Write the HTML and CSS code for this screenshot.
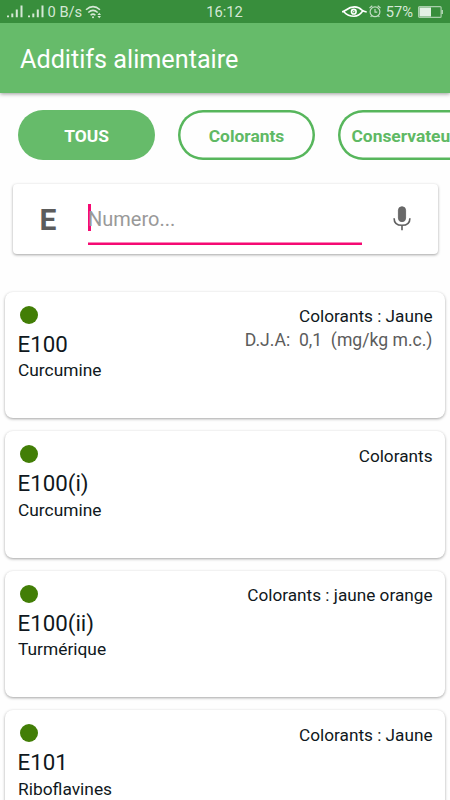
FILE: index.html
```html
<!DOCTYPE html>
<html lang="fr">
<head>
<meta charset="utf-8">
<meta name="viewport" content="width=device-width">
<title>Additifs alimentaire</title>
<link rel="stylesheet" href="styles.css">
</head>
<body>
<header>
  <div class="status">
    <div class="status-side">
      <svg class="signal" width="17" height="13" viewBox="0 0 17 13"><path d="M2 10.500v1.700M6.300 8.500v3.700M10.800 4.500v7.700M15.500 .5v11.700"/></svg>
      <svg class="signal second" width="17" height="13" viewBox="0 0 17 13"><path d="M2 10.500v1.700M6.300 8.500v3.700M10.800 4.500v7.700M15.500 .5v11.700"/></svg>
      <span class="rate">0 B/s</span>
      <svg class="wifi" width="17" height="14" viewBox="0 0 17 14"><path d="M1 4.800Q8 -1.500 15 4.800M3.300 7.500Q8 3.300 12.700 7.500M5.600 10.200Q8 8 10.400 10.200"/><circle cx="8" cy="12.300" r="1"/><path class="arrows" d="M14.200 7.800l1.800 2.300h-3.600zM14.200 13.200l1.800-2.300h-3.600z"/></svg>
    </div>
    <span class="clock">16:12</span>
    <div class="status-side right">
      <svg class="eye" width="25" height="12" viewBox="0 0 25 12"><path d="M0 5.700Q2 5.500 4 4Q8 .9 12.500 .9Q17 .9 20 4.200Q21.500 5.500 24.700 6M2 6Q6 10.300 12 10.300Q17 10.300 20.500 5.300"/><circle cx="11.800" cy="5.700" r="2.300"/><circle class="pupil" cx="11.800" cy="5.700" r=".8"/></svg>
      <svg class="alarm" width="12" height="13" viewBox="0 0 12 13"><circle cx="6" cy="6.800" r="4.900"/><path d="M.5 3L3.300 .8M8.700 .8L11.500 3M6 4v3.200h2.300M2.700 10.500l-1 1.500M9.300 10.500l1 1.500"/></svg>
      <span class="percent">57%</span>
      <svg class="battery" width="25" height="12" viewBox="0 0 25 12"><rect class="shell" x=".6" y=".6" width="22.500" height="10.800" rx="1"/><rect class="charge" x="1.500" y="1.500" width="11.500" height="9"/><path class="charge" d="M23.700 4h1v4h-1z"/></svg>
    </div>
  </div>
  <div class="appbar"><h1>Additifs alimentaire</h1></div>
</header>
<nav class="chips">
  <button class="chip active">TOUS</button>
  <button class="chip">Colorants</button>
  <button class="chip long">Conservateurs</button>
</nav>
<section class="search">
  <span class="prefix">E</span>
  <div class="field"><span class="caret"></span><span class="hint">Numero...</span></div>
  <svg class="mic" width="18" height="25" viewBox="0 0 18 25"><rect x="5.400" y=".7" width="7.200" height="15" rx="3.600"/><path d="M1.100 12.200C1.100 17 4.500 19.300 9 19.300S16.900 17 16.900 12.200M9 19.300v5"/></svg>
</section>
<main>
  <article class="card">
    <div class="item"><i class="dot"></i><h2>E100</h2><p>Curcumine</p></div>
    <div class="info"><p>Colorants : Jaune</p><p class="dose">D.J.A:&nbsp; 0,1&nbsp; (mg/kg m.c.)</p></div>
  </article>
  <article class="card">
    <div class="item"><i class="dot"></i><h2>E100(i)</h2><p>Curcumine</p></div>
    <div class="info"><p>Colorants</p></div>
  </article>
  <article class="card">
    <div class="item"><i class="dot"></i><h2>E100(ii)</h2><p>Turmérique</p></div>
    <div class="info"><p>Colorants : jaune orange</p></div>
  </article>
  <article class="card">
    <div class="item"><i class="dot"></i><h2>E101</h2><p>Riboflavines</p></div>
    <div class="info"><p>Colorants : Jaune</p></div>
  </article>
</main>
</body>
</html>
```
FILE: styles.css
```css
* { box-sizing: border-box; }
body {
  margin: 0;
  height: 800px;
  overflow: hidden;
  background: #fefefe;
  color: #101820;
  font-family: Roboto, sans-serif;
}
h1, h2, p { margin: 0; font-weight: 400; }
svg { display: block; flex: none; fill: none; }
header {
  height: 92.500px;
  background: #66bb6a;
  box-shadow: 0 1px 4px rgba(0, 0, 0, .4);
}
.status {
  display: grid;
  grid-template-columns: 1fr auto 1fr;
  align-items: center;
  height: 22.500px;
  padding: 0 7px 0 6px;
  background: #388e3c;
  color: #d5e8d6;
  font-size: 14.700px;
  line-height: 22px;
}
.clock, .rate, .percent { padding-top: 1px; }
.status-side { display: flex; align-items: center; }
.right { justify-content: flex-end; }
.signal { stroke: #d5e8d6; stroke-width: 2; }
.second { margin-left: 3.500px; }
.rate { margin-left: 4px; }
.wifi { margin-left: 2.500px; stroke: #d5e8d6; stroke-width: 1.500; }
.wifi circle, .wifi .arrows { fill: #d5e8d6; stroke: none; }
.eye { stroke: #fff; stroke-width: 1.600; }
.eye .pupil { fill: #fff; stroke: none; }
.alarm { margin-left: 2px; stroke: #c0dcc2; stroke-width: 1.200; }
.percent { margin-left: 5px; }
.battery { margin-left: 5px; }
.shell { stroke: #a8cfaa; stroke-width: 1.200; }
.charge { fill: #e4f1e5; }
.appbar {
  display: flex;
  align-items: center;
  height: 70px;
  padding: 5px 0 0 20px;
}
h1 { color: #fff; font-size: 25.200px; line-height: 30px; }
.chips {
  display: flex;
  gap: 23px;
  padding: 17.500px 0 0 18px;
  overflow: hidden;
}
.chip {
  flex: none;
  width: 137px;
  height: 50px;
  padding: 2px 0 0;
  border: 0;
  border-radius: 25px;
  background: #fefefe;
  box-shadow: inset 0 0 0 2.500px #57b65c;
  color: #5fb964;
  font: 700 17.400px Roboto, sans-serif;
  white-space: nowrap;
}
.long { padding-left: 4px; }
.active { background: #66bb6a; box-shadow: none; color: #fff; }
.search {
  display: flex;
  align-items: center;
  height: 70.500px;
  margin: 23.500px 12px 0 12.500px;
  padding: 0 27px 0 26.500px;
  border-radius: 4px;
  background: #fff;
  box-shadow: 0 1px 3px rgba(0, 0, 0, .36);
}
.prefix { width: 49px; padding: 2px 0 0 .5px; color: #5c5c5c; font-size: 30px; font-weight: 700; line-height: 36px; }
.field {
  display: flex;
  align-items: center;
  width: 274px;
  height: 43px;
  margin-top: 10px;
  padding-bottom: 11px;
  box-shadow: inset 0 -2.500px #f50a73;
  color: #999;
  font-size: 20px;
}
.hint { padding-top: 1px; }
.caret { width: 2.500px; height: 27px; margin-right: -2.500px; margin-top: -1px; background: #f50a73; }
.mic { margin-left: auto; stroke: #5f5f5f; stroke-width: 1.600; }
.mic rect { fill: #696969; stroke: #5f5f5f; stroke-width: .8; }
main {
  display: flex;
  flex-direction: column;
  gap: 13px;
  padding: 37.500px 5px 0;
}
.card {
  display: flex;
  flex: none;
  justify-content: space-between;
  height: 126.500px;
  padding: 14.300px 12.500px 0 13px;
  border-radius: 8px;
  background: #fff;
  box-shadow: 0 1px 3px rgba(0, 0, 0, .36);
  font-size: 17.200px;
  line-height: 24px;
}
.dot {
  display: block;
  width: 18px;
  height: 18px;
  margin: 0 0 6px 2px;
  border-radius: 50%;
  background: #427e06;
}
h2 { margin-left: -.5px; font-size: 22.300px; line-height: 28.500px; }
.item p { font-size: 17.350px; line-height: 24.500px; }
.info { margin-top: -1.500px; text-align: right; }
.dose { color: #5c5c5c; font-size: 17.600px; }
```
